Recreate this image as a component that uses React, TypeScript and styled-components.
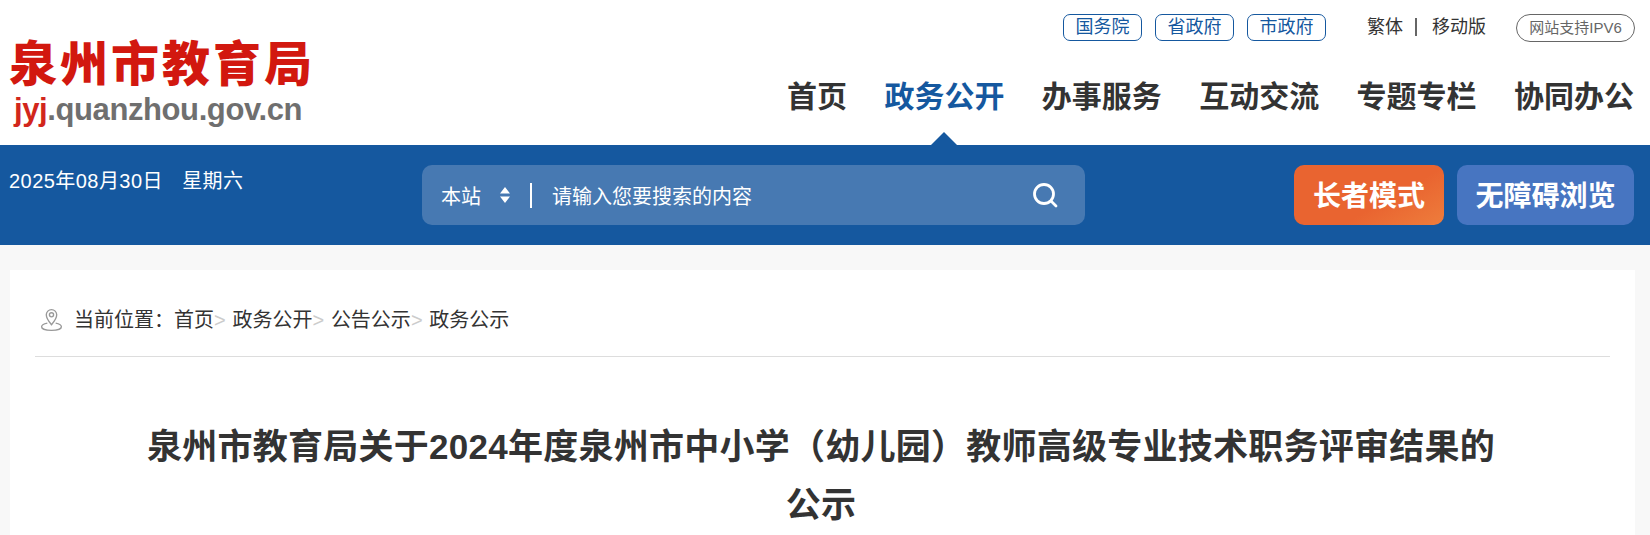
import React from 'react'
import styled, { createGlobalStyle } from 'styled-components'

const GlobalStyle = createGlobalStyle`
  html, body {
    margin: 0;
    padding: 0;
    background: #f8f8f8;
    overflow: hidden;
    font-family: "Liberation Sans", "Noto Sans CJK SC", sans-serif;
  }
  * { box-sizing: border-box; }
`

const Page = styled.div`
  width: 1650px;
  height: 535px;
  overflow: hidden;
`

const Header = styled.header`
  height: 145px;
  background: #fff;
  display: flex;
  justify-content: space-between;
`

const Logo = styled.div`
  padding: 40px 0 0 9px;
  width: 330px;
`

const LogoTitle = styled.div`
  color: #d2180f;
  font-size: 48px;
  line-height: 50px;
  font-weight: 900;
  letter-spacing: 3px;
  white-space: nowrap;
`

const LogoUrl = styled.div`
  font-size: 31px;
  line-height: 36px;
  font-weight: 700;
  color: #6f6f6f;
  margin: 2px 0 0 5px;
  letter-spacing: -0.4px;
  span { color: #d2261c; }
`

const HeaderRight = styled.div`
  width: 890px;
  padding-right: 15px;
  display: flex;
  flex-direction: column;
  align-items: flex-end;
`

const TopLinks = styled.div`
  margin-top: 14px;
  height: 36px;
  display: flex;
  align-items: flex-start;
`

const GovLink = styled.a`
  width: 79px;
  height: 27px;
  margin-right: 13px;
  border: 1px solid #15589f;
  border-radius: 7px;
  color: #15589f;
  font-size: 18px;
  line-height: 25px;
  text-align: center;
`

const LangLink = styled.a<{ $first?: boolean }>`
  margin-left: ${p => (p.$first ? '28px' : '0')};
  color: #333;
  font-size: 18px;
  line-height: 26px;
`

const LangDivider = styled.i`
  width: 2px;
  height: 18px;
  margin: 4px 15px 0 12px;
  background: #666;
`

const IpvBadge = styled.span`
  width: 119px;
  height: 28px;
  margin-left: 30px;
  border: 1px solid #666;
  border-radius: 14px;
  color: #666;
  font-size: 15px;
  line-height: 25px;
  text-align: center;
`

const Nav = styled.nav`
  margin: 25px 1px 0 0;
  display: flex;
  gap: 37.4px;
`

const NavItem = styled.a<{ $active?: boolean }>`
  position: relative;
  display: block;
  font-size: 30px;
  line-height: 44px;
  font-weight: 700;
  color: ${p => (p.$active ? '#15589f' : '#333')};
`

const NavCaret = styled.i`
  position: absolute;
  left: 50%;
  bottom: -26px;
  margin-left: -13px;
  border-left: 13px solid transparent;
  border-right: 13px solid transparent;
  border-bottom: 13px solid #15589f;
`

const Bar = styled.div`
  height: 100px;
  background: #15589f;
  display: flex;
  padding: 20px 0 0 9px;
  color: #fff;
`

const DateText = styled.div`
  width: 413px;
  font-size: 20px;
  line-height: 32px;
  letter-spacing: 0.45px;
  word-spacing: -1.2px;
  white-space: pre;
`

const Search = styled.div`
  width: 663px;
  height: 60px;
  border-radius: 10px;
  background: #4779b2;
  display: flex;
  align-items: center;
  padding: 0 27px 0 19px;
`

const Scope = styled.span`
  font-size: 20px;
  width: 40px;
`

const ScopeArrows = styled.svg`
  width: 12px;
  height: 18px;
  margin-left: 18px;
`

const SearchDivider = styled.i`
  width: 2px;
  height: 25px;
  margin: 0 20px 0 19px;
  background: #fff;
`

const Placeholder = styled.span`
  flex: 1;
  font-size: 20px;
`

const SearchIcon = styled.svg`
  width: 26px;
  height: 26px;
`

const ModeButtons = styled.div`
  display: flex;
  gap: 13px;
  margin-left: 209px;
`

const ModeButton = styled.a<{ $tone: 'orange' | 'blue' }>`
  width: ${p => (p.$tone === 'orange' ? '150px' : '177px')};
  height: 60px;
  border-radius: 10px;
  background: ${p =>
    p.$tone === 'orange'
      ? 'linear-gradient(150deg, #e96430 60%, #ee7d3c 100%)'
      : '#4775c1'};
  font-size: 28px;
  line-height: 64px;
  font-weight: 700;
  text-align: center;
`

const Card = styled.main`
  margin: 25px 15px 0 10px;
  height: 300px;
  background: #fff;
  padding: 0 25px;
`

const Crumbs = styled.div`
  height: 87px;
  border-bottom: 1px solid #ddd;
  padding: 36px 0 0 5px;
  display: flex;
  align-items: flex-start;
  font-size: 20px;
  line-height: 28px;
  color: #333;
`

const PinIcon = styled.svg`
  width: 23px;
  height: 25px;
  margin: 1px 11px 0 0;
`

const CrumbSep = styled.span`
  color: #ccc;
  margin-right: 1.2px;
`

const Title = styled.h1`
  margin: 61px 0 0;
  padding: 0 106px 0 103px;
  text-align: center;
  font-size: 35px;
  line-height: 58px;
  font-weight: 700;
  letter-spacing: 0.25px;
  color: #333;
`

const navItems = ['首页', '政务公开', '办事服务', '互动交流', '专题专栏', '协同办公']
const crumbs = ['政务公开', '公告公示', '政务公示']

export default function App() {
  return (
    <Page>
      <GlobalStyle />
      <Header>
        <Logo>
          <LogoTitle>泉州市教育局</LogoTitle>
          <LogoUrl><span>jyj</span>.quanzhou.gov.cn</LogoUrl>
        </Logo>
        <HeaderRight>
          <TopLinks>
            <GovLink>国务院</GovLink>
            <GovLink>省政府</GovLink>
            <GovLink>市政府</GovLink>
            <LangLink $first>繁体</LangLink>
            <LangDivider />
            <LangLink>移动版</LangLink>
            <IpvBadge>网站支持IPV6</IpvBadge>
          </TopLinks>
          <Nav>
            {navItems.map((item, i) => (
              <NavItem key={item} $active={i === 1}>
                {item}
                {i === 1 && <NavCaret />}
              </NavItem>
            ))}
          </Nav>
        </HeaderRight>
      </Header>
      <Bar>
        <DateText>2025年08月30日{'    '}星期六</DateText>
        <Search>
          <Scope>本站</Scope>
          <ScopeArrows viewBox="0 0 12 18">
            <path d="M6 1l5 6.500H1zM6 17l-5-6.500h10z" fill="#fff" />
          </ScopeArrows>
          <SearchDivider />
          <Placeholder>请输入您要搜索的内容</Placeholder>
          <SearchIcon viewBox="0 0 26 26" fill="none" stroke="#fff" strokeWidth="2.8">
            <circle cx="12" cy="12" r="9.500" />
            <path d="M19 19l5 5" strokeLinecap="round" />
          </SearchIcon>
        </Search>
        <ModeButtons>
          <ModeButton $tone="orange">长者模式</ModeButton>
          <ModeButton $tone="blue">无障碍浏览</ModeButton>
        </ModeButtons>
      </Bar>
      <Card>
        <Crumbs>
          <PinIcon viewBox="0 0 22 24" fill="none" stroke="#999" strokeWidth="1.3">
            <path d="M11 17C7.500 13 6 10.500 6 7.500a5 5 0 0 1 10 0C16 10.500 14.500 13 11 17z" />
            <circle cx="11" cy="7.500" r="2" />
            <path d="M7 15.500C3.500 16.200 1.500 17.500 1.500 19c0 2 4 3.500 9.500 3.500s9.500-1.500 9.500-3.500c0-1.500-2-2.800-5.500-3.500" />
          </PinIcon>
          当前位置：首页
          {crumbs.map(c => (
            <React.Fragment key={c}>
              <CrumbSep>&gt;</CrumbSep>&nbsp;{c}
            </React.Fragment>
          ))}
        </Crumbs>
        <Title>泉州市教育局关于2024年度泉州市中小学（幼儿园）教师高级专业技术职务评审结果的公示</Title>
      </Card>
    </Page>
  )
}
